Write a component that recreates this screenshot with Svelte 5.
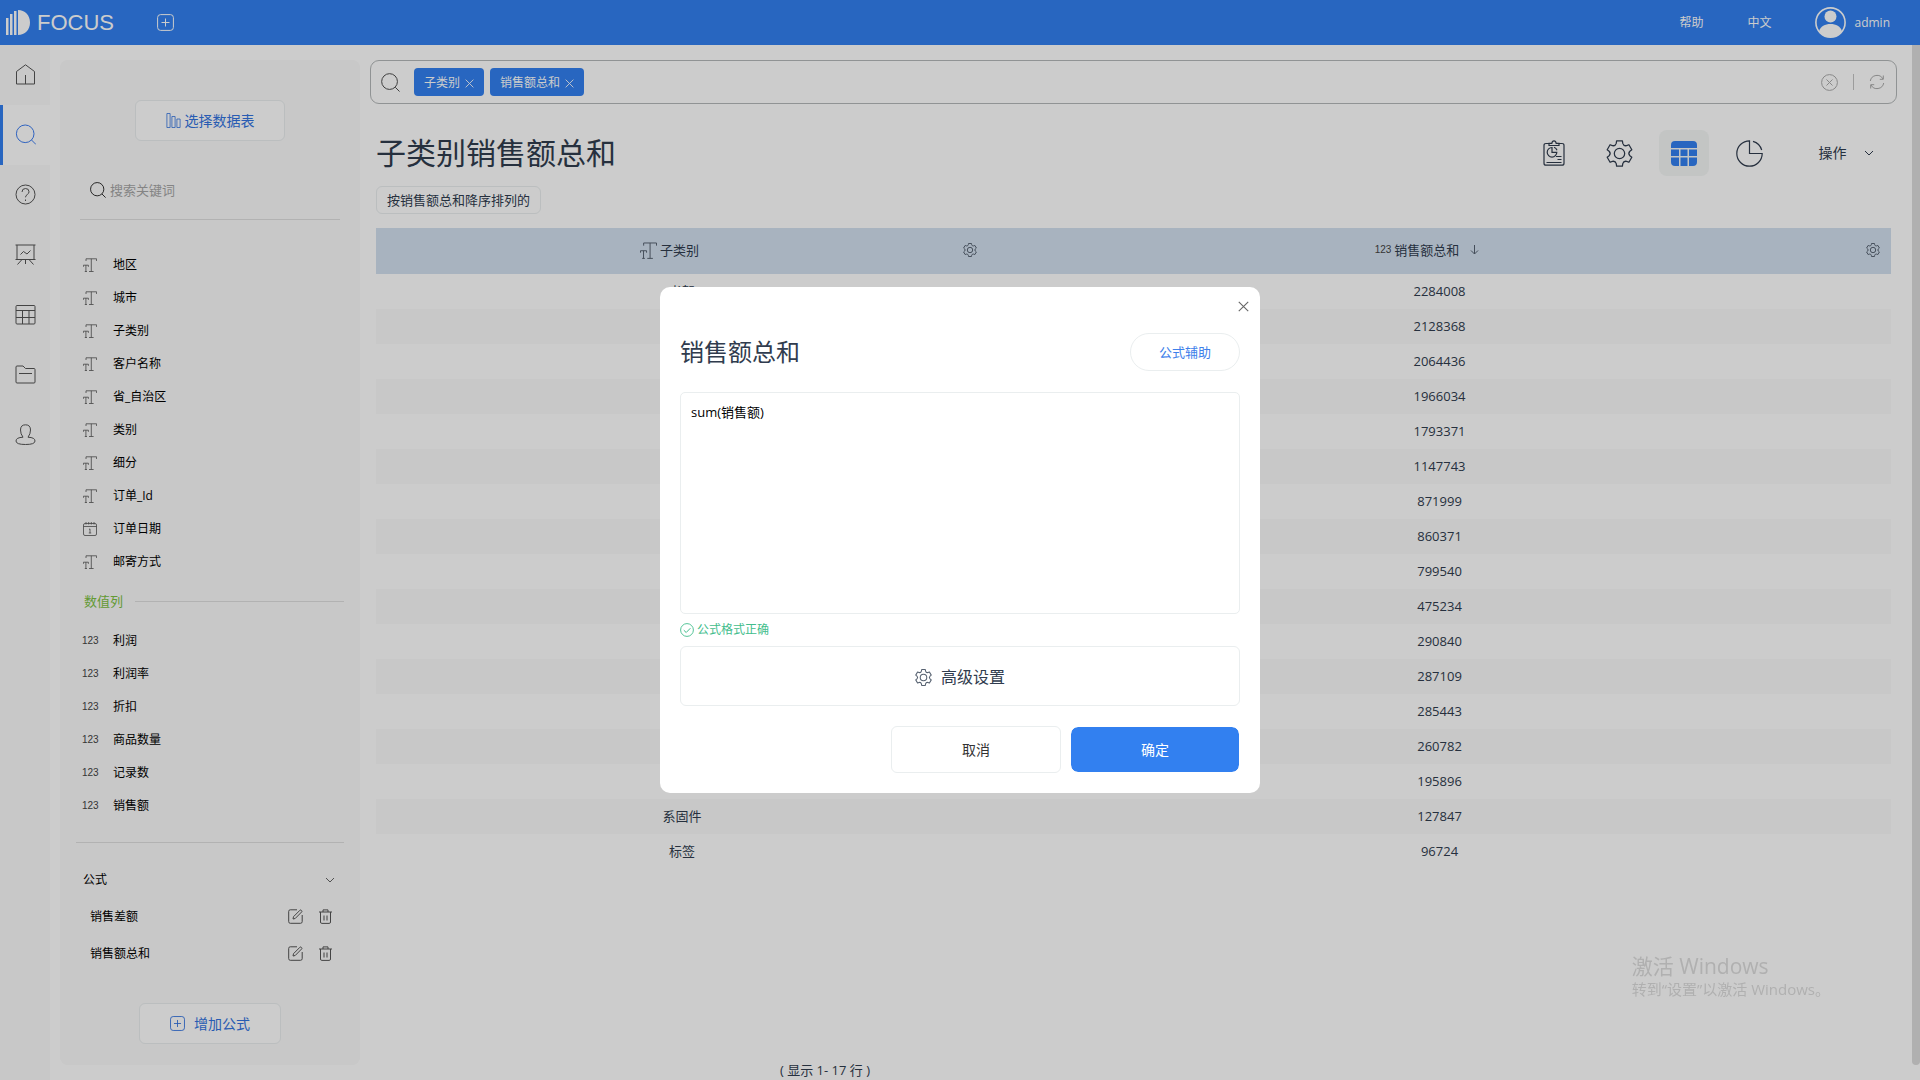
<style>
  :global(body) {
    background: #fff;
  }

  .app {
    display: flex;
    flex-direction: column;

    min-height: 100vh;

    color: #303c4e;
    font-family: 'Open Sans', 'Noto Sans CJK SC', sans-serif;
    font-size: 13px;
    line-height: 20px;
  }

  .app :global(*) {
    box-sizing: border-box;
  }

  button {
    padding: 0;

    border: none;
    background: none;
    color: inherit;
    font: inherit;

    cursor: pointer;
  }

  a {
    color: inherit;
    text-decoration: none;
  }

  ul {
    margin: 0;
    padding: 0;

    list-style: none;
  }

  svg {
    display: block;
    flex: none;

    fill: none;
    stroke: currentColor;
  }

  /* top bar */
  .topbar {
    display: flex;
    align-items: center;

    height: 45px;
    padding: 0 30px 0 6px;

    background: #3280f0;
    color: #fff;
    font-size: 12px;
  }

  .brand {
    display: flex;
    align-items: center;
    gap: 7px;

    font-family: 'Liberation Sans', sans-serif;
    font-size: 22px;
  }

  .new {
    margin: 0 auto 0 43px;
  }

  .links {
    display: flex;
    align-items: center;
    gap: 44px;
  }

  .user {
    display: flex;
    align-items: center;
    gap: 8px;
  }

  /* layout */
  .body {
    display: flex;
    flex: 1;
  }

  .rail {
    width: 50px;

    background: #fafafa;
    color: #555;
  }

  .rail a {
    display: flex;
    align-items: center;

    height: 60px;
    padding: 0 0 2px 12px;

    border-left: 3px solid transparent;
  }

  .rail a.active {
    border-left-color: #3280f0;
    background: #fff;
    color: #3d7df0;
  }

  .panel {
    width: 300px;
    margin: 15px 10px;
    padding: 40px 16px 20px;

    border-radius: 8px;
    background: #fafafa;
    color: #000;
    font-size: 12px;
  }

  .outline {
    display: flex;
    align-items: center;
    justify-content: center;

    border: 1px solid #eaeeef;
    border-radius: 6px;
    background: #fff;
  }

  .pick,
  .add {
    height: 41px;
    margin: 0 auto;

    color: #3273e0;
    font-size: 14px;
  }

  .pick {
    gap: 4px;
    width: 150px;
  }

  .add {
    gap: 9px;
    width: 142px;
  }

  .keyword {
    display: flex;
    align-items: center;
    gap: 4px;

    height: 59px;
    margin: 20px 4px 28px;
    padding: 0 10px;

    border-bottom: 1px solid #dfdfdf;
  }

  .keyword input {
    width: 100%;
    padding: 0;

    border: none;
    outline: none;
    background: transparent;
    font: inherit;
    font-size: 13px;
  }

  .keyword input::placeholder {
    color: #a6a6a6;
    opacity: 1;
  }

  .fields li {
    display: grid;
    align-items: center;
    grid-template-columns: 31px 1fr;

    height: 33px;
    padding-left: 6px;
  }

  .fields svg {
    margin-left: 1px;

    color: #555;
  }

  .num {
    color: #444;
    font-family: 'Liberation Sans', sans-serif;
    font-size: 10px;
  }

  .group {
    display: flex;
    align-items: center;
    gap: 12px;

    height: 46px;
    padding-left: 8px;

    color: #7cc142;
    font-size: 13px;
  }

  .group::after {
    flex: 1;
    height: 1px;

    background: #dfdfdf;
    content: '';
  }

  .formulas {
    margin-top: 20px;
    padding: 18px 7px 31px;

    border-top: 1px solid #dfdfdf;
  }

  .toggle {
    display: flex;
    align-items: center;
    justify-content: space-between;

    width: 100%;
    height: 37px;
    padding-right: 2px;
  }

  .toggle svg {
    color: #666;
  }

  .formulas li {
    display: flex;
    align-items: center;
    gap: 16px;

    height: 37px;
    padding: 0 5px 0 7px;

    color: #000;
  }

  .formulas li span {
    flex: 1;
  }

  .formulas li button {
    color: #555;
  }

  /* main column */
  .main {
    display: flex;
    flex: 1;
    flex-direction: column;

    min-width: 0;
    padding: 15px 15px 0 0;
  }

  .search {
    display: flex;
    align-items: center;
    gap: 6px;

    height: 44px;
    padding: 0 11px 0 10px;

    border: 1px solid #b4b8b9;
    border-radius: 9px;
    color: #444;
  }

  .search > svg {
    margin-right: 8px;
  }

  .tag {
    display: flex;
    align-items: center;
    gap: 5px;

    height: 28px;
    padding: 2px 10px 0;

    border-radius: 4px;
    background: #3280f0;
    color: #fff;
    font-size: 12px;
  }

  .search input {
    flex: 1;
    min-width: 0;

    border: none;
    outline: none;
    background: transparent;
    font: inherit;
  }

  .tools {
    display: flex;
    align-items: center;
    gap: 15px;

    color: #aaa;
  }

  .tools i {
    width: 1px;
    height: 16px;

    background: #c4c4c4;
  }

  .content {
    display: flex;
    flex: 1;
    flex-direction: column;

    padding: 26px 6px 0;
  }

  .heading {
    display: flex;
    align-items: center;
    justify-content: space-between;

    height: 46px;
  }

  h1 {
    margin: 0;

    font-size: 30px;
    font-weight: 400;
    line-height: 46px;
  }

  .views {
    display: flex;
    align-items: center;
    gap: 15px;
  }

  .views > button {
    display: flex;
    align-items: center;
    justify-content: center;

    width: 50px;
    height: 46px;

    border-radius: 8px;
  }

  .views > button.on {
    background: #f4f7f6;
    color: #3280f0;
  }

  .views > button.action {
    gap: 17px;
    width: 90px;
    margin-left: 12px;

    font-size: 14px;
  }

  .sort {
    align-self: flex-start;

    height: 28px;
    margin: 10px 0 14px;
    padding: 0 10px;
  }

  table {
    width: 100%;

    border-collapse: collapse;
    table-layout: fixed;
  }

  .first {
    width: 40.4%;
  }

  th {
    height: 46px;
    padding: 0 11px 2px 0;

    background: #d2e0ef;
    font-weight: 400;
  }

  .head {
    display: flex;
    align-items: center;
  }

  .head > span {
    display: flex;
    flex: 1;
    align-items: center;
    justify-content: center;
    gap: 3px;
  }

  .head svg {
    color: #566170;
  }

  .head .arrow {
    margin-left: 8px;
  }

  td {
    height: 35px;
    padding: 0 0 2px;

    text-align: center;
  }

  tr:nth-child(even) td {
    background: #fafafa;
  }

  .pager {
    margin: auto 0 0 404px;
  }

  .scroll {
    width: 8px;
    margin-bottom: 15px;

    border-radius: 0 0 4px 4px;
    background: #dcdcdc;
  }

  /* dialog */
  .overlay {
    position: fixed;
    inset: 0;

    display: flex;
    align-items: center;
    justify-content: center;

    background: rgba(0, 0, 0, 0.2);
  }

  .dialog {
    position: relative;

    width: 600px;
    padding: 46px 20px 20px;

    border-radius: 10px;
    background: #fff;
  }

  .close {
    position: absolute;
    top: 14px;
    right: 11px;

    color: #666;
  }

  .title {
    display: flex;
    align-items: center;
    justify-content: space-between;

    margin-bottom: 21px;
  }

  h2 {
    margin: 0;

    font-size: 24px;
    font-weight: 400;
    line-height: 38px;
  }

  .helper {
    width: 110px;
    height: 38px;

    border-radius: 19px;
    color: #3e80ea;
  }

  textarea {
    display: block;

    width: 100%;
    height: 222px;
    padding: 9px 10px;

    border: 1px solid #eaeeef;
    border-radius: 5px;
    outline: none;
    color: #000;
    font: inherit;
    resize: none;
  }

  .valid {
    display: flex;
    align-items: center;
    gap: 3px;

    height: 32px;
    margin: 0;

    color: #42bd8c;
    font-size: 12px;
  }

  .advanced {
    gap: 9px;
    width: 100%;
    height: 60px;
    padding-top: 2px;

    font-size: 16px;
  }

  .advanced svg {
    color: #566170;
  }

  .buttons {
    display: flex;
    justify-content: flex-end;
    gap: 9px;

    margin-top: 20px;
  }

  .buttons button {
    width: 170px;
    height: 47px;

    color: #333;
    font-size: 14px;
  }

  .buttons button.ok {
    border-color: #fff;
    border-radius: 8px;
    background: #3280f0;
    background-clip: padding-box;
    color: #fff;
  }

  .watermark {
    position: fixed;
    right: 90px;
    bottom: 79px;

    color: #b0b0b0;
    font-size: 15px;
    line-height: 23px;
  }

  .watermark strong {
    display: block;

    font-size: 21px;
    font-weight: 400;
  }
</style>

{#snippet textIcon(size)}
  <svg width={size} height={size} viewBox="0 0 14 14">
    <path stroke-width=".8" d="M3 3V.8h10.6V3M8.3.8v12.6M6 13.5h4.6M.4 8.8V7.2h5v1.6M2.9 7.2v6.3M1.8 13.5H4" />
  </svg>
{/snippet}

{#snippet lens(size)}
  <svg width={size} height={size} viewBox="0 0 20 20">
    <circle cx="9" cy="9" r="8.3" />
    <path d="M15 15l4.5 4.5" />
  </svg>
{/snippet}

{#snippet gear(size, weight)}
  <svg width={size} height={size} viewBox="0 0 26 26" stroke-width={weight} stroke-linejoin="round">
    <path d={gearPath} />
    <circle cx="13" cy="13" r="5" />
  </svg>
{/snippet}

{#snippet cross(size)}
  <svg width={size} height={size} viewBox="0 0 10 10"><path d="M.7.7l8.6 8.6M9.3.7L.7 9.3" /></svg>
{/snippet}

{#snippet plusBox(size)}
  <svg width={size} height={size} viewBox="0 0 17 17">
    <rect x=".6" y=".6" width="15.8" height="15.8" rx="3" />
    <path d="M8.5 4.5v8M4.5 8.5h8" />
  </svg>
{/snippet}

{#snippet chevron()}
  <svg width="10" height="6" viewBox="0 0 10 6"><path d="M1 1l4 4 4-4" /></svg>
{/snippet}

<div class="app">
  <header class="topbar">
    <a class="brand" href="#home">
      <svg width="24" height="26" viewBox="0 0 24 26">
        <path fill="currentColor" stroke="none" d="M0 8h2.500v17H0zM4 4h2.500v21H4zM8 1h2.500v24H8zM12 0c7 0 12 5.200 12 12.500S19 25 12 25z" />
      </svg>
      FOCUS
    </a>
    <button class="new" aria-label="新建">{@render plusBox(17)}</button>
    <nav class="links">
      <a href="#help">帮助</a>
      <a href="#lang">中文</a>
      <a class="user" href="#user">
        <svg width="31" height="31" viewBox="0 0 31 31">
          <circle cx="15.500" cy="15.500" r="14.600" stroke-width="1.600" />
          <circle cx="15.500" cy="9.500" r="6" fill="currentColor" stroke="none" />
          <path fill="currentColor" stroke="none" d="M4 24.500C5.500 19 10 17 15.500 17S25.500 19 27 24.500A14.600 14.600 0 0 1 4 24.500z" />
        </svg>
        admin
      </a>
    </nav>
  </header>

  <div class="body">
    <nav class="rail">
      {#each rail as item}
        <a class:active={item.id === 'search'} href="#{item.id}" aria-label={item.label}>
          <svg width="21" height="21" viewBox="0 0 21 21"><path d={item.icon} /></svg>
        </a>
      {/each}
    </nav>

    <aside class="panel">
      <button class="outline pick">
        <svg width="15" height="15" viewBox="0 0 15 15"><path stroke-width=".8" d="M.9.5h3.200v14H.9zM5.900 3.500h3.200v11H5.900zM10.900 6h3.200v8.500h-3.200z" /></svg>
        选择数据表
      </button>

      <label class="keyword">
        {@render lens(16)}
        <input type="text" placeholder="搜索关键词" aria-label="搜索关键词" />
      </label>

      <ul class="fields">
        {#each attributes as name}
          <li>
            {#if name === '订单日期'}
              <svg width="14" height="14" viewBox="0 0 14 14">
                <path stroke-width=".8" d="M2 1.500h10q1.500 0 1.500 1.500v9q0 1.500-1.500 1.500H2Q.5 13.500.5 12V3Q.5 1.500 2 1.500zM.5 4.500h13M3 0v2.500M5.700 0v2.500M8.300 0v2.500M11 0v2.500M6 7.500l1-.6V11M5.800 11h2.400" />
              </svg>
            {:else}
              {@render textIcon(14)}
            {/if}
            {name}
          </li>
        {/each}
      </ul>

      <div class="group">数值列</div>

      <ul class="fields">
        {#each measures as name}
          <li><span class="num">123</span>{name}</li>
        {/each}
      </ul>

      <section class="formulas">
        <button class="toggle">公式 {@render chevron()}</button>
        <ul>
          {#each formulas as name}
            <li>
              <span>{name}</span>
              <button aria-label="编辑">
                <svg width="15" height="15" viewBox="0 0 15 15"><path d="M9 .8H2.300Q.7.8.7 2.400v10.200q0 1.700 1.600 1.700h10.200q1.700 0 1.700-1.700V6M5 10l.5-2.300L12 1.200q.6-.5 1.200 0l.5.500q.5.600 0 1.200L7.200 9.500z" /></svg>
              </button>
              <button aria-label="删除">
                <svg width="13" height="15" viewBox="0 0 13 15"><path d="M0 3h13M4 3V.9h5V3M1.500 3v10q0 1.400 1.300 1.400h7.400q1.300 0 1.300-1.400V3M5 6.500v5M8 6.500v5" /></svg>
              </button>
            </li>
          {/each}
        </ul>
      </section>

      <button class="outline add">{@render plusBox(15)} 增加公式</button>
    </aside>

    <main class="main">
      <div class="search">
        {@render lens(19)}
        {#each tags as tag}
          <button class="tag">{tag} {@render cross(9)}</button>
        {/each}
        <input type="text" aria-label="搜索" />
        <div class="tools">
          <button aria-label="清空">
            <svg width="17" height="17" viewBox="0 0 17 17"><circle cx="8.500" cy="8.500" r="7.900" /><path d="M5.500 5.500l6 6M11.500 5.500l-6 6" /></svg>
          </button>
          <i></i>
          <button aria-label="刷新">
            <svg width="16" height="16" viewBox="0 0 16 16"><path d="M1.300 7A6.800 6.800 0 0 1 14 5M14.300 1.500V5.300h-3.500M14.700 9A6.800 6.800 0 0 1 2 11M1.700 14.500v-3.800h3.500" /></svg>
          </button>
        </div>
      </div>

      <div class="content">
        <div class="heading">
          <h1>子类别销售额总和</h1>
          <div class="views">
            <button aria-label="看板">
              <svg width="22" height="26" viewBox="0 0 22 26" stroke-width="1.200">
                <path d="M6 3.500H3Q1 3.500 1 5.500v17.700q0 2 2 2h16q2 0 2-2V5.500q0-2-2-2h-3M6 5.500V3.300h2.800q.4-2.500 2.200-2.500t2.200 2.500H16v2.200zM3.500 22.500h15M13 16.500h5.500M14.500 19.500h4" />
                <path d="M9 7.500a4.800 4.800 0 1 0 4.800 4.800H9zM11 7.300a5 5 0 0 1 3 3" />
              </svg>
            </button>
            <button aria-label="设置">{@render gear(27, 1.2)}</button>
            <button class="on" aria-label="表格">
              <svg width="26" height="25" viewBox="0 0 26 25">
                <path fill="currentColor" stroke="none" d="M4 0h18q4 0 4 4v3H0V4q0-4 4-4zM0 8.500h8V15H0zM9.500 8.500h7V15h-7zM18 8.500h8V15h-8zM0 16.500h8V25H4q-4 0-4-4zM9.500 16.500h7V25h-7zM18 16.500h8V21q0 4-4 4h-4z" />
              </svg>
            </button>
            <button aria-label="图表">
              <svg width="27" height="27" viewBox="0 0 27 27" stroke-width="1.200"><path d="M13.500.8a12.700 12.700 0 1 0 12.700 12.700H13.500zM17 1.300a12.700 12.700 0 0 1 8.700 8.700" /></svg>
            </button>
            <button class="action">操作 {@render chevron()}</button>
          </div>
        </div>

        <button class="outline sort">按销售额总和降序排列的</button>

        <table>
          <thead>
            <tr>
              <th class="first">
                <div class="head">
                  <span>{@render textIcon(17)}子类别</span>
                  <button aria-label="列设置">{@render gear(14, 1.8)}</button>
                </div>
              </th>
              <th>
                <div class="head">
                  <span>
                    <span class="num">123</span>销售额总和
                    <svg class="arrow" width="9" height="10" viewBox="0 0 9 10"><path d="M4.500 0v9M1 5.500L4.500 9 8 5.500" /></svg>
                  </span>
                  <button aria-label="列设置">{@render gear(14, 1.8)}</button>
                </div>
              </th>
            </tr>
          </thead>
          <tbody>
            {#each rows as [name, total]}
              <tr>
                <td>{name}</td>
                <td>{total}</td>
              </tr>
            {/each}
          </tbody>
        </table>

        <div class="pager">( 显示 1- {rows.length} 行 )</div>
      </div>
    </main>

    <div class="scroll"></div>
  </div>

  <div class="overlay">
    <div class="dialog" role="dialog" aria-labelledby="dialog-title">
      <button class="close" aria-label="关闭">{@render cross(11)}</button>
      <div class="title">
        <h2 id="dialog-title">销售额总和</h2>
        <button class="outline helper">公式辅助</button>
      </div>
      <textarea aria-label="公式" bind:value={formula}></textarea>
      <p class="valid">
        <svg width="14" height="14" viewBox="0 0 14 14"><circle cx="7" cy="7" r="6.400" stroke-width=".9" /><path d="M3.800 7.200l2.400 2.300 4.200-4.300" /></svg>
        公式格式正确
      </p>
      <button class="outline advanced">{@render gear(17, 1.6)} 高级设置</button>
      <div class="buttons">
        <button class="outline">取消</button>
        <button class="outline ok">确定</button>
      </div>
    </div>
  </div>

  <div class="watermark">
    <strong>激活 Windows</strong>
    转到“设置”以激活 Windows。
  </div>
</div>

<script>
  const rail = [
    { id: 'home', label: '首页', icon: 'M1.500 7.500L10.500.8l9 6.700V20h-18zM10.500 11v9' },
    { id: 'search', label: '搜索', icon: 'M19 9.800a8.800 8.800 0 1 1-17.600 0a8.800 8.800 0 1 1 17.600 0M16.500 16l4.500 4.500' },
    { id: 'help', label: '帮助', icon: 'M20 10.500a9.500 9.500 0 1 1-19 0a9.500 9.500 0 1 1 19 0M7 8q0-3.500 3.500-3.500T14 7.800q0 1.700-1.700 2.700t-1.800 2.800M10.500 15.500v1.500' },
    { id: 'board', label: '看板', icon: 'M.5 1h20M2 1v14.500M19 1v14.500M.5 15.500h20M5.500 10.500l3-3 3.500 2.500 3.500-3.500M7 15.500L2.500 20.500M14 15.500l4.500 5M10.500 15.500V20' },
    { id: 'table', label: '数据表', icon: 'M2 1.500h17q1 0 1 1V19q0 1-1 1H2q-1 0-1-1V2.500q0-1 1-1zM1 6.500h19M1 13.500h19M7.500 6.500V20M14 6.500V20' },
    { id: 'files', label: '资源', icon: 'M2 2h6l2.500 2.500H19q1 0 1 1V18q0 1-1 1H2q-1 0-1-1V3q0-1 1-1zM4 9.500h13' },
    { id: 'users', label: '用户', icon: 'M10.500.8q5 0 5 5.200 0 4-2.500 7.200 7 .3 7 3.800 0 3.500-9.500 3.500T1 17q0-3.500 7-3.800Q5.500 10 5.500 6q0-5.200 5-5.200z' }
  ];

  const attributes = ['地区', '城市', '子类别', '客户名称', '省_自治区', '类别', '细分', '订单_Id', '订单日期', '邮寄方式'];
  const measures = ['利润', '利润率', '折扣', '商品数量', '记录数', '销售额'];
  const formulas = ['销售差额', '销售额总和'];
  const tags = ['子类别', '销售额总和'];

  const rows = [
    ['书架', 2284008],
    ['椅子', 2128368],
    ['复印机', 2064436],
    ['电话', 1966034],
    ['器具', 1793371],
    ['收纳具', 1147743],
    ['设备', 871999],
    ['桌子', 860371],
    ['配件', 799540],
    ['用具', 475234],
    ['装订机', 290840],
    ['用品', 287109],
    ['信封', 285443],
    ['纸张', 260782],
    ['美术', 195896],
    ['系固件', 127847],
    ['标签', 96724]
  ];

  let formula = 'sum(销售额)';

  const point = (radius, degrees) => {
    const angle = (degrees * Math.PI) / 180;
    return `${(13 + radius * Math.sin(angle)).toFixed(2)} ${(13 - radius * Math.cos(angle)).toFixed(2)}`;
  };

  // six teeth joined by curved valleys
  const gearPath =
    [0, 60, 120, 180, 240, 300]
      .map((a, i) => {
        const start = i ? '' : `M${point(10.2, a - 18)}`;
        return `${start}L${point(12.4, a - 13)}L${point(12.4, a + 13)}L${point(10.2, a + 18)}Q${point(8, a + 30)} ${point(10.2, a + 42)}`;
      })
      .join('') + 'z';
</script>
